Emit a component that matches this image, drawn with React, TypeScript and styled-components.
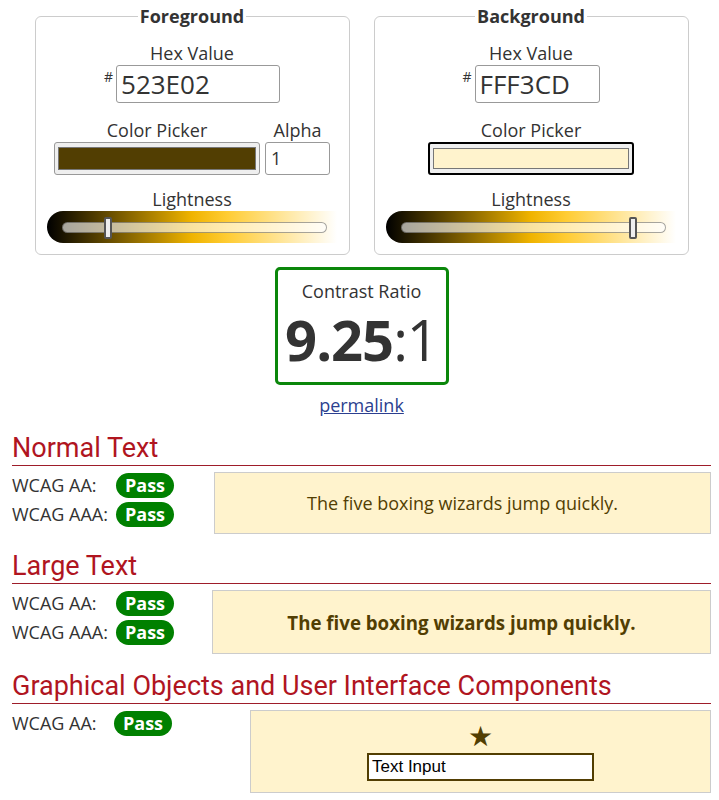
import React from 'react';
import styled, { createGlobalStyle } from 'styled-components';

const fg = '#523E02';
const bg = '#FFF3CD';

const GlobalStyle = createGlobalStyle`
  body {
    margin: 0;
    background: #fff;
    font-family: 'Open Sans', 'Liberation Sans', sans-serif;
    color: #333;
    font-size: 18px;
  }
`;

const Page = styled.div`
  padding: 0 8px 0 12px;
  width: 699px;
`;

const Pickers = styled.div`
  display: flex;
  justify-content: center;
  gap: 24px;
`;

const Fieldset = styled.fieldset`
  width: 315px;
  box-sizing: border-box;
  margin: 4px 0 0;
  padding: 13px 0 11px;
  border: 1px solid #ccc;
  border-radius: 6px;
  display: flex;
  flex-direction: column;
  align-items: center;
`;

const Legend = styled.legend`
  margin: 0 auto;
  padding: 0 2px;
  font-weight: 700;
  font-size: 18px;
  line-height: 24px;
  color: #333;
`;

const Label = styled.div`
  font-size: 18px;
  line-height: 24px;
  text-align: center;
  color: #333;
`;

const HexRow = styled.div`
  display: flex;
  align-items: flex-start;
  margin-bottom: 15px;
`;

const Hash = styled.span`
  font-size: 14px;
  line-height: 14px;
  margin: 5px 3px 0 0;
`;

const HexInput = styled.div<{ $w: number }>`
  width: ${(p) => p.$w}px;
  height: 38px;
  box-sizing: border-box;
  border: 1px solid #999;
  border-radius: 3px;
  font-size: 26px;
  line-height: 36px;
  padding-left: 4px;
  color: #333;
`;

const PickerRow = styled.div`
  display: flex;
  gap: 5px;
  margin-bottom: 12px;
`;

const Column = styled.div`
  display: flex;
  flex-direction: column;
  align-items: center;
`;

const Swatch = styled.div<{ $color: string; $focus?: boolean }>`
  width: 206px;
  height: 33px;
  box-sizing: border-box;
  padding: 4px 3px;
  background: #efefef;
  border: ${(p) => (p.$focus ? '2px solid #000' : '1px solid #999')};
  border-radius: 3px;
  &::after {
    content: '';
    display: block;
    height: 100%;
    box-sizing: border-box;
    background: ${(p) => p.$color};
    border: 1px solid #777;
  }
`;

const AlphaInput = styled.div`
  width: 65px;
  height: 33px;
  box-sizing: border-box;
  border: 1px solid #999;
  border-radius: 3px;
  font-size: 18px;
  line-height: 31px;
  padding-left: 5px;
`;

const Slider = styled.div`
  width: 290px;
  height: 32px;
  box-sizing: border-box;
  padding: 11px 10px 0 15px;
  border-radius: 16px 0 0 16px;
  background: linear-gradient(
    to right,
    #000 0%,
    hsl(45, 100%, 47%) 50%,
    hsl(45, 100%, 60%) 62%,
    #fff 100%
  );
`;

const Track = styled.div`
  position: relative;
  height: 11px;
  box-sizing: border-box;
  border: 1px solid rgba(0, 0, 0, 0.35);
  border-radius: 6px;
  background: rgba(255, 255, 255, 0.62);
`;

const Thumb = styled.div`
  position: absolute;
  top: -6px;
  width: 8px;
  height: 22px;
  margin-left: -4px;
  box-sizing: border-box;
  background: #eee;
  border: 2px solid #555;
  border-radius: 2px;
`;

const RatioWrap = styled.div`
  display: flex;
  flex-direction: column;
  align-items: center;
  margin-top: 12px;
`;

const RatioBox = styled.div`
  width: 174px;
  height: 118px;
  box-sizing: border-box;
  border: 3px solid #0b870b;
  border-radius: 5px;
  text-align: center;
  padding-top: 9px;
`;

const Ratio = styled.div`
  font-size: 56px;
  line-height: 64px;
  color: #333;
  margin-top: 4px;
  letter-spacing: -1px;
  b {
    font-weight: 700;
  }
`;

const Permalink = styled.a`
  margin-top: 8px;
  color: #2c3f8f;
  text-decoration: underline;
  font-size: 18px;
  line-height: 24px;
`;

const Heading = styled.h2`
  margin: 17px 0 0;
  font-family: Roboto, 'Liberation Sans', sans-serif;
  font-weight: 400;
  font-size: 27px;
  line-height: 30px;
  color: #b0151f;
  padding-bottom: 2px;
  border-bottom: 1px solid #9e1d2a;
  &:first-of-type {
    margin-top: 16px;
  }
`;

const ResultRow = styled.div<{ $left: number }>`
  display: grid;
  grid-template-columns: ${(p) => p.$left}px 1fr;
  margin-top: 6px;
`;

const Checks = styled.div`
  display: flex;
  flex-direction: column;
  gap: 4px;
  padding-top: 1px;
`;

const Check = styled.div<{ $pill: number }>`
  display: grid;
  grid-template-columns: ${(p) => p.$pill}px auto;
  align-items: center;
  justify-items: start;
  font-size: 18px;
  line-height: 25px;
`;

const Pass = styled.span`
  background: #008000;
  color: #fff;
  font-weight: 700;
  border-radius: 13px;
  height: 25px;
  width: 58px;
  text-align: center;
  line-height: 25px;
`;

const Sample = styled.div<{ $h: number }>`
  height: ${(p) => p.$h}px;
  box-sizing: border-box;
  background: ${bg};
  border: 1px solid #ccc;
  color: ${fg};
  display: flex;
  flex-direction: column;
  align-items: center;
  justify-content: center;
`;

const NormalSample = styled.span`
  font-size: 18px;
`;

const LargeSample = styled.span`
  font-size: 18.7px;
  font-weight: 700;
`;

const Star = styled.span`
  font-size: 28px;
  line-height: 30px;
  color: ${fg};
  font-family: 'DejaVu Sans', sans-serif;
`;

const TextInput = styled.div`
  margin-top: 1px;
  width: 227px;
  height: 28px;
  box-sizing: border-box;
  border: 2px solid ${fg};
  background: #fff;
  color: #000;
  font-family: 'Liberation Sans', Arial, sans-serif;
  font-size: 17px;
  line-height: 24px;
  padding-left: 3px;
`;

type PickerProps = {
  title: string;
  hex: string;
  hexWidth: number;
  color: string;
  lightness: number;
  alpha?: boolean;
  focus?: boolean;
};

function Picker({ title, hex, hexWidth, color, lightness, alpha, focus }: PickerProps) {
  return (
    <Fieldset>
      <Legend>{title}</Legend>
      <Label>Hex Value</Label>
      <HexRow>
        <Hash>#</Hash>
        <HexInput $w={hexWidth}>{hex}</HexInput>
      </HexRow>
      <PickerRow>
        <Column>
          <Label>Color Picker</Label>
          <Swatch $color={color} $focus={focus} />
        </Column>
        {alpha && (
          <Column>
            <Label>Alpha</Label>
            <AlphaInput>1</AlphaInput>
          </Column>
        )}
      </PickerRow>
      <Label>Lightness</Label>
      <Slider>
        <Track>
          <Thumb style={{ left: `${lightness}%` }} />
        </Track>
      </Slider>
    </Fieldset>
  );
}

export default function App() {
  return (
    <Page>
      <GlobalStyle />
      <Pickers>
        <Picker title="Foreground" hex="523E02" hexWidth={164} color={fg} lightness={17} alpha />
        <Picker title="Background" hex="FFF3CD" hexWidth={125} color={bg} lightness={88} focus />
      </Pickers>

      <RatioWrap>
        <RatioBox>
          <Label>Contrast Ratio</Label>
          <Ratio>
            <b>9.25</b>:1
          </Ratio>
        </RatioBox>
        <Permalink href="#">permalink</Permalink>
      </RatioWrap>

      <Heading>Normal Text</Heading>
      <ResultRow $left={202}>
        <Checks>
          <Check $pill={104}>
            WCAG AA: <Pass>Pass</Pass>
          </Check>
          <Check $pill={104}>
            WCAG AAA: <Pass>Pass</Pass>
          </Check>
        </Checks>
        <Sample $h={62}>
          <NormalSample>The five boxing wizards jump quickly.</NormalSample>
        </Sample>
      </ResultRow>

      <Heading>Large Text</Heading>
      <ResultRow $left={200}>
        <Checks>
          <Check $pill={104}>
            WCAG AA: <Pass>Pass</Pass>
          </Check>
          <Check $pill={104}>
            WCAG AAA: <Pass>Pass</Pass>
          </Check>
        </Checks>
        <Sample $h={64}>
          <LargeSample>The five boxing wizards jump quickly.</LargeSample>
        </Sample>
      </ResultRow>

      <Heading>Graphical Objects and User Interface Components</Heading>
      <ResultRow $left={238}>
        <Checks>
          <Check $pill={102}>
            WCAG AA: <Pass>Pass</Pass>
          </Check>
        </Checks>
        <Sample $h={83}>
          <Star>★</Star>
          <TextInput>Text Input</TextInput>
        </Sample>
      </ResultRow>
    </Page>
  );
}
